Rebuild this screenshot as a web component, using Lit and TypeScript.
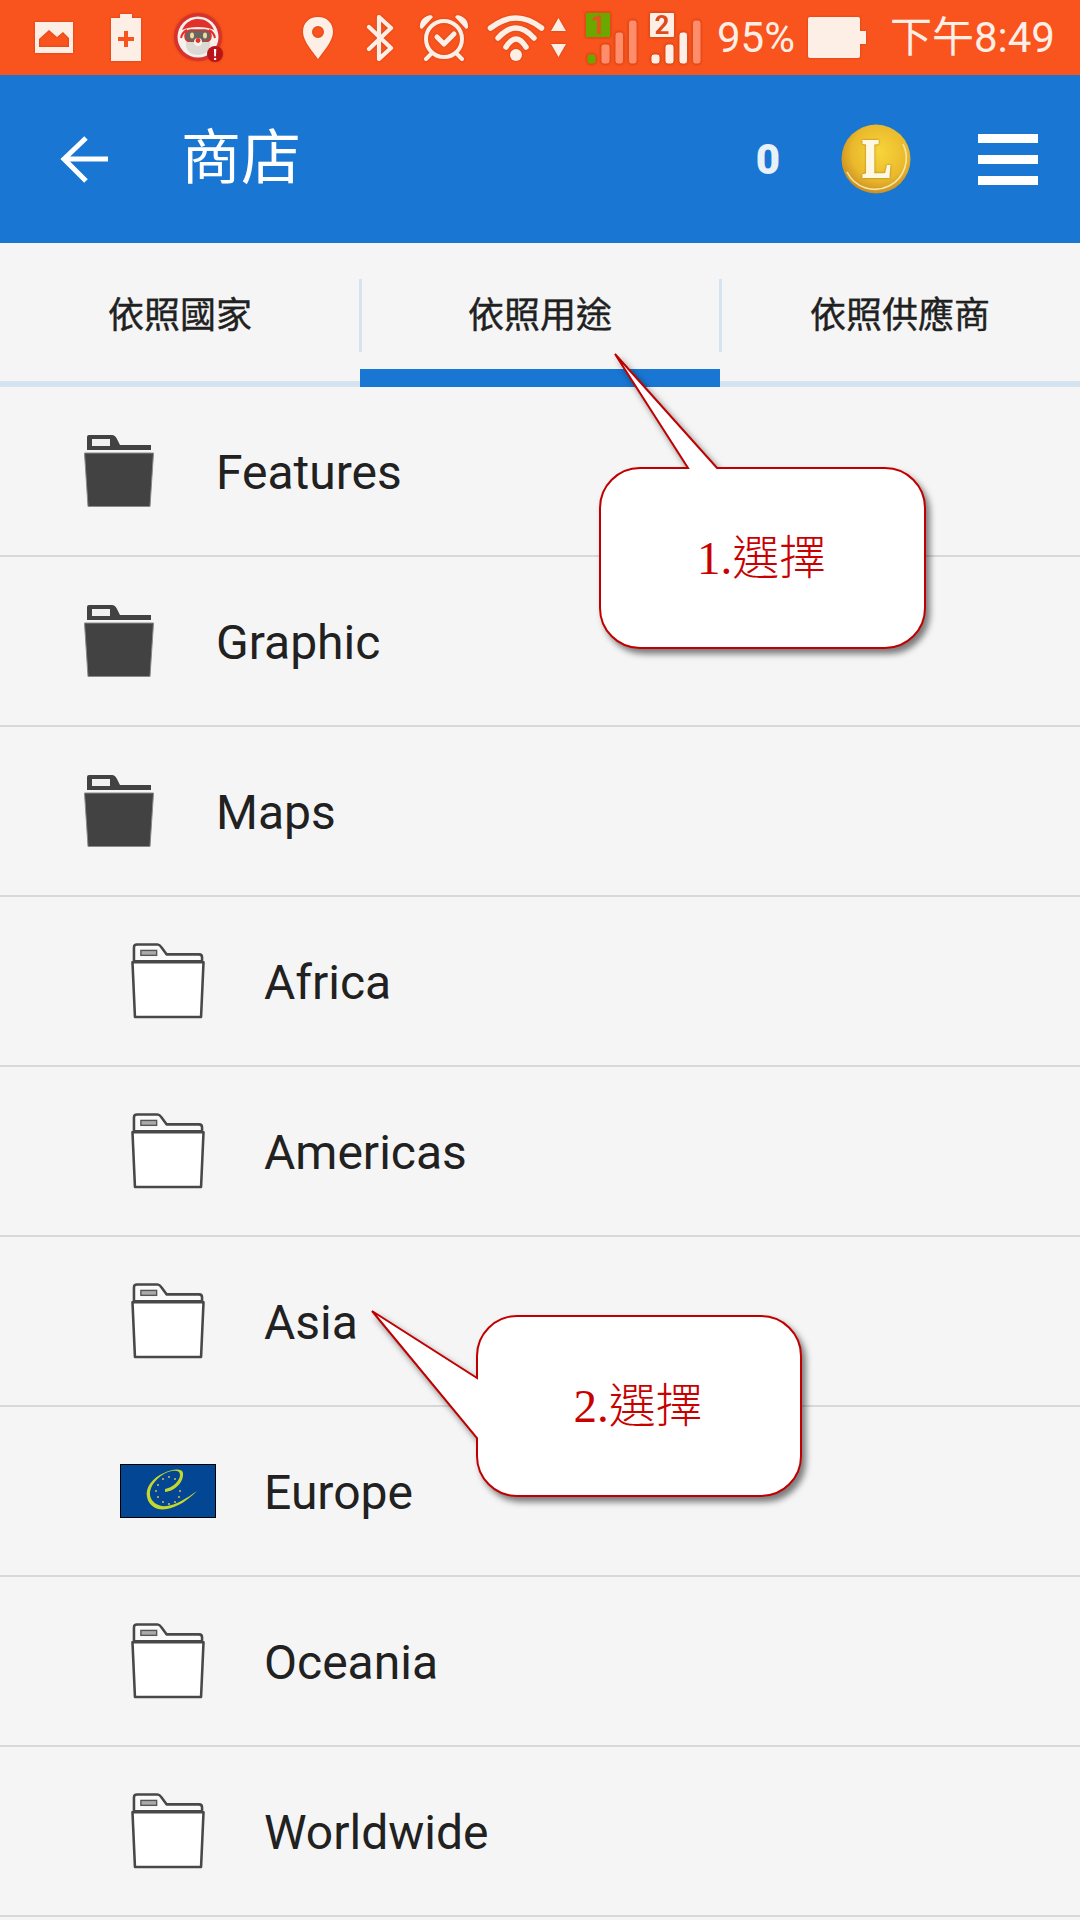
import { LitElement, css, html, svg } from 'lit'
import { customElement } from 'lit/decorators.js'

const tabs = ['依照國家', '依照用途', '依照供應商']

type Row = { name: string; kind: 'dark' | 'outline' | 'flag' }

const rows: Row[] = [
  { name: 'Features', kind: 'dark' },
  { name: 'Graphic', kind: 'dark' },
  { name: 'Maps', kind: 'dark' },
  { name: 'Africa', kind: 'outline' },
  { name: 'Americas', kind: 'outline' },
  { name: 'Asia', kind: 'outline' },
  { name: 'Europe', kind: 'flag' },
  { name: 'Oceania', kind: 'outline' },
  { name: 'Worldwide', kind: 'outline' },
]

const darkFolder = html`<svg class="folder-dark" viewBox="0 0 70 72">
  <path fill="#424242" d="M3 15V2Q3 0 5 0H28Q31 0 33 4L36 10H67V15Z" />
  <rect x="8" y="4" width="18" height="7" fill="#f0f0f0" />
  <path fill="#424242" stroke="#8a8a8a" stroke-width="1" d="M.5 18H69.5L66 71.5H4Z" />
</svg>`

const outlineFolder = html`<svg class="folder-outline" viewBox="0 0 75 76">
  <path fill="#fafafa" stroke="#484848" stroke-width="2.6" stroke-linejoin="round" d="M3 18V4Q3 1 6 1H27Q29 1 31 4L36 11H69Q72 11 72 14V18Z" />
  <rect x="10" y="7" width="16" height="5" fill="#aaa" stroke="#555" stroke-width="1.4" />
  <path fill="#fff" stroke="#484848" stroke-width="2.6" stroke-linejoin="round" d="M1.5 19H73.5L71 74.5H4Z" />
</svg>`

const flag = html`<svg class="flag" viewBox="0 0 96 54">
  <rect width="96" height="54" fill="#000" />
  <rect x="1" y="1" width="94" height="52" fill="#034694" />
  <path fill="#c3d82c" d="M45 28C55 27 64 18 63 9C62 4 52 5 44 9C32 14 25 24 27 33C29 43 38 47 47 45C58 43 68 36 77 27C67 34 56 41 47 42C38 43 31 38 30 31C29 22 38 12 48 8C55 6 60 6 60 11C60 17 52 24 45 25Z" />
  ${[[43, 15], [49, 13], [55, 15], [38, 21], [36, 27], [60, 27], [38, 33], [59, 33], [43, 38], [49, 40], [55, 38]].map(
    ([x, y]) => svg`<circle cx=${x} cy=${y} r="1.1" fill="#c8b45a" />`,
  )}
</svg>`

const rowIcon = (kind: Row['kind']) => {
  if (kind === 'dark') return darkFolder
  if (kind === 'flag') return flag
  return outlineFolder
}

const signal = (num: string, badge: string, digit: string, bars: string[]) => html`<svg class="i-signal" viewBox="0 -4 52 57">
  <rect x="0.5" y="0.5" width="25" height="25" rx="1.5" fill=${badge} stroke="#e44c17" />
  <text x="13" y="22" text-anchor="middle" class="badge-num" fill=${digit}>${num}</text>
  <g stroke="#e44c17">
    <rect x="2" y="42" width="9" height="10" rx="3" fill=${bars[0]} />
    <rect x="16" y="32" width="9" height="20" rx="3" fill=${bars[1]} />
    <rect x="30" y="20" width="8.5" height="32" rx="3" fill=${bars[2]} />
    <rect x="43.5" y="8" width="8.5" height="44" rx="3" fill=${bars[3]} />
  </g>
</svg>`

@customElement('app-root')
export class AppRoot extends LitElement {
  render() {
    return html`
      <div class="status">
        <svg class="i-image" viewBox="0 0 38 31">
          <path fill="#fdeee6" fill-rule="evenodd" d="M0 0H38V31H0ZM4 25H34V16L28 10L22 15L14 8L4 17Z" />
        </svg>
        <svg class="i-charge" viewBox="0 0 30 47">
          <path fill="#fdeee6" d="M9 0H21V4H30V47H0V4H9Z" />
          <path fill="#f9531e" d="M13 17H17V23H23V27H17V33H13V27H7V23H13Z" />
        </svg>
        <svg class="i-santa" viewBox="0 0 50 50">
          <circle cx="25" cy="24" r="24" fill="#d8322e" />
          <circle cx="25" cy="24" r="20.5" fill="#f7f1ec" />
          <path fill="#e0312c" d="M9 17C13 8 20 6 25 6C31 6 38 9 41 17C33 13 17 13 9 17Z" />
          <path fill="none" stroke="#e0312c" stroke-width="2" d="M8 25C9 20 12 18 14 17M42 25C41 20 38 18 36 17" />
          <rect x="12" y="17" width="26" height="12" rx="5.5" fill="#6b6560" stroke="#e0312c" stroke-width="1.5" />
          <ellipse cx="19" cy="22.500" rx="2" ry="3" fill="#f3d9a0" />
          <ellipse cx="32" cy="22.500" rx="2" ry="3" fill="#f3d9a0" />
          <path fill="#dcd8d3" d="M13 29H37C38 37 33 42 25 42C17 42 12 37 13 29Z" />
          <circle cx="25" cy="29" r="4" fill="#f7f1ec" />
          <circle cx="25" cy="27.500" r="2.400" fill="#e0312c" />
          <circle cx="42" cy="41" r="8" fill="#b91418" />
          <text x="42" y="47" text-anchor="middle" class="alert">!</text>
        </svg>
        <svg class="i-pin" viewBox="0 0 30 42">
          <path fill="#fdeee6" fill-rule="evenodd" d="M15 0C24 0 30 6 30 15C30 24 20 35 15 42C10 35 0 24 0 15C0 6 6 0 15 0ZM15 9A6 6 0 1 0 15 21A6 6 0 1 0 15 9Z" />
        </svg>
        <svg class="i-bt" viewBox="0 0 28 46">
          <path fill="none" stroke="#fdeee6" stroke-width="4.2" stroke-linejoin="round" stroke-linecap="round" d="M3 12L25 33L13 44V2L25 13L3 34" />
        </svg>
        <svg class="i-alarm" viewBox="0 0 50 48">
          <g fill="none" stroke="#fdeee6" stroke-width="4" stroke-linecap="round" stroke-linejoin="round">
            <circle cx="25" cy="25" r="18" />
            <path stroke-width="5" d="M18 23L25 30L35 20" />
            <path d="M12 40L7 45M38 40L43 45" />
          </g>
          <path fill="#fdeee6" d="M1 14C0 7 5 2 12 1L14 3L3 15ZM49 14C50 7 45 2 38 1L36 3L47 15Z" />
        </svg>
        <svg class="i-wifi" viewBox="0 0 58 47">
          <g fill="none" stroke="#fdeee6" stroke-width="5.500" stroke-linecap="round">
            <path d="M3.500 14Q29 -6 54.500 14" />
            <path d="M11 24Q29 4 47 24" />
            <path d="M19 33Q29 17 39 33" />
          </g>
          <circle cx="29" cy="41" r="6" fill="#fdeee6" />
        </svg>
        <svg class="i-arrows" viewBox="0 0 15 39">
          <path fill="#fdeee6" d="M7.500 0L15 13H0ZM0 26H15L7.500 39Z" />
        </svg>
        ${signal('1', '#6aa800', '#e8501c', ['#6aa800', '#ff8d6c', '#ff8d6c', '#ff8d6c'])}
        ${signal('2', '#fdeee6', '#e0491c', ['#fdeee6', '#fdeee6', '#fdeee6', '#ff8d6c'])}
        <span class="pct">95%</span>
        <svg class="i-battery" viewBox="0 0 58 41">
          <path fill="#fdeee6" d="M2 0H50Q52 0 52 2V14H58V27H52V39Q52 41 50 41H2Q0 41 0 39V2Q0 0 2 0Z" />
        </svg>
        <span class="time">下午8:49</span>
      </div>

      <header class="bar">
        <svg class="back" viewBox="0 0 48 48">
          <path fill="none" stroke="#fff" stroke-width="5" d="M48 24H4M26 3L4 24L26 46" />
        </svg>
        <span class="title">商店</span>
        <span class="count">0</span>
        <svg class="coin" viewBox="0 0 70 70">
          <defs>
            <radialGradient id="gold" cx="0.55" cy="0.4" r="0.62">
              <stop offset="0" stop-color="#f7d63a" />
              <stop offset="0.65" stop-color="#eab92c" />
              <stop offset="1" stop-color="#c98c20" />
            </radialGradient>
          </defs>
          <circle cx="35" cy="35" r="34.500" fill="url(#gold)" />
          <path fill="none" stroke="#f6e6ac" stroke-width="1.600" d="M6 48A31 31 0 0 0 62 20" />
          <g transform="translate(36 53) scale(0.8 1)">
            <text text-anchor="middle" class="coin-l">L</text>
          </g>
        </svg>
        <div class="menu"><i></i><i></i><i></i></div>
      </header>

      <nav class="tabs">
        ${tabs.map((t, i) => html`<div class="tab ${i === 1 ? 'active' : ''}">${t}</div>`)}
      </nav>

      <div class="list">
        ${rows.map(
          (r) => html`<div class="row ${r.kind === 'dark' ? 'top' : 'sub'}">
            <div class="icon">${rowIcon(r.kind)}</div>
            <span class="name">${r.name}</span>
          </div>`,
        )}
      </div>

      <div class="callout c1">
        <svg class="shape" viewBox="-120 -120 450 310">
          <path class="bubble" d="M40 0H88L15 -114L117 0H285A40 40 0 0 1 325 40V140A40 40 0 0 1 285 180H40A40 40 0 0 1 0 140V40A40 40 0 0 1 40 0Z" />
        </svg>
        <span class="note">1.選擇</span>
      </div>
      <div class="callout c2">
        <svg class="shape" viewBox="-120 -120 450 310">
          <path class="bubble" d="M40 0H284A40 40 0 0 1 324 40V140A40 40 0 0 1 284 180H40A40 40 0 0 1 0 140V122L-105 -5L0 62V40A40 40 0 0 1 40 0Z" />
        </svg>
        <span class="note">2.選擇</span>
      </div>
    `
  }

  static styles = css`
    :host {
      display: block;
      position: relative;
      width: 1080px;
      height: 1920px;
      overflow: hidden;
      background: #f5f5f5;
      font-family: Roboto, 'Noto Sans CJK TC', sans-serif;
    }
    svg {
      display: block;
      flex: none;
    }

    .status {
      display: flex;
      align-items: center;
      height: 75px;
      padding-left: 35px;
      box-sizing: border-box;
      background: #f9531e;
      color: #fdeee6;
    }
    .status svg {
      filter: drop-shadow(0 0 1px rgba(170, 50, 0, 0.55));
    }
    .i-image { width: 38px; height: 31px; margin-right: 38px; }
    .i-charge { width: 30px; height: 47px; margin-right: 32px; }
    .i-santa { width: 50px; height: 50px; margin-right: 80px; }
    .i-pin { width: 30px; height: 42px; margin-right: 33px; }
    .i-bt { width: 28px; height: 46px; margin-right: 25px; }
    .i-alarm { width: 50px; height: 48px; margin-right: 18px; }
    .i-wifi { width: 58px; height: 47px; margin-right: 6px; }
    .i-arrows { width: 15px; height: 39px; margin-right: 19px; }
    .i-signal { width: 52px; height: 57px; margin: 0 12px 2px 0; }
    .i-battery { width: 58px; height: 41px; margin-right: 24px; }
    .badge-num { font: 700 26px Roboto, sans-serif; }
    .alert { font: 700 15px Roboto, sans-serif; fill: #fff; }
    .pct {
      font-size: 42px;
      line-height: 1;
      margin: 0 13px 0 4px;
    }
    .time {
      font-size: 42px;
      line-height: 1;
      white-space: nowrap;
    }

    .bar {
      display: flex;
      align-items: center;
      height: 168px;
      padding-left: 60px;
      background: #1976d2;
      color: #fff;
    }
    .back { width: 48px; height: 48px; margin-right: 73px; }
    .title { font-size: 60px; line-height: 1; }
    .count {
      margin-left: auto;
      margin-right: 61px;
      font-size: 42px;
      font-weight: 900;
      color: #e8f0f8;
    }
    .coin { width: 70px; height: 70px; margin-right: 67px; }
    .coin-l {
      font: 700 54px 'Liberation Serif', serif;
      fill: #fff8e2;
      stroke: #fff8e2;
      stroke-width: 2px;
      filter: drop-shadow(0 0 1px #a87515);
    }
    .menu {
      display: flex;
      flex-direction: column;
      gap: 12px;
      width: 60px;
      margin-right: 42px;
    }
    .menu i {
      display: block;
      height: 9px;
      background: #fff;
    }

    .tabs {
      display: flex;
      height: 144px;
      box-sizing: border-box;
      border-bottom: 6px solid #d6e3f0;
    }
    .tab {
      position: relative;
      flex: 1;
      display: flex;
      align-items: center;
      justify-content: center;
      font-size: 36px;
      font-weight: 400;
      color: #212121;
      -webkit-text-stroke: 0.4px #212121;
    }
    .tab + .tab::before {
      content: '';
      position: absolute;
      left: -1px;
      top: 36px;
      width: 3px;
      height: 73px;
      background: #d6e3f0;
    }
    .tab.active::after {
      content: '';
      position: absolute;
      left: 0;
      right: 0;
      bottom: -6px;
      height: 18px;
      background: #1976d2;
    }

    .row {
      display: flex;
      align-items: center;
      height: 170px;
      box-sizing: border-box;
      border-bottom: 2px solid #d8d8d8;
      font-size: 48px;
      color: #212121;
    }
    .name {
      padding-top: 2px;
    }
    .icon {
      display: flex;
      justify-content: center;
    }
    .top .icon { width: 70px; margin: 0 62px 0 84px; }
    .sub .icon { width: 96px; margin: 0 48px 0 120px; }
    .folder-dark { width: 70px; height: 72px; }
    .folder-outline { width: 74px; height: 76px; margin-left: -1px; }
    .flag { width: 96px; height: 54px; }

    .callout {
      position: absolute;
      display: flex;
      align-items: center;
      justify-content: center;
      width: 325px;
      height: 180px;
    }
    .c1 { left: 600px; top: 468px; }
    .c2 { left: 477px; top: 1316px; width: 324px; }
    .shape {
      position: absolute;
      left: -120px;
      top: -120px;
      width: 450px;
      height: 310px;
      overflow: visible;
      filter: drop-shadow(4px 5px 3px rgba(0, 0, 0, 0.5));
    }
    .bubble {
      fill: #fff;
      stroke: #c00000;
      stroke-width: 2;
      stroke-linejoin: miter;
    }
    .note {
      position: relative;
      left: -1px;
      font-family: 'Liberation Serif', 'Noto Sans CJK TC', serif;
      font-size: 47px;
      font-weight: 300;
      line-height: 1;
      color: #c80000;
    }
  `
}

declare global {
  interface HTMLElementTagNameMap {
    'app-root': AppRoot
  }
}
